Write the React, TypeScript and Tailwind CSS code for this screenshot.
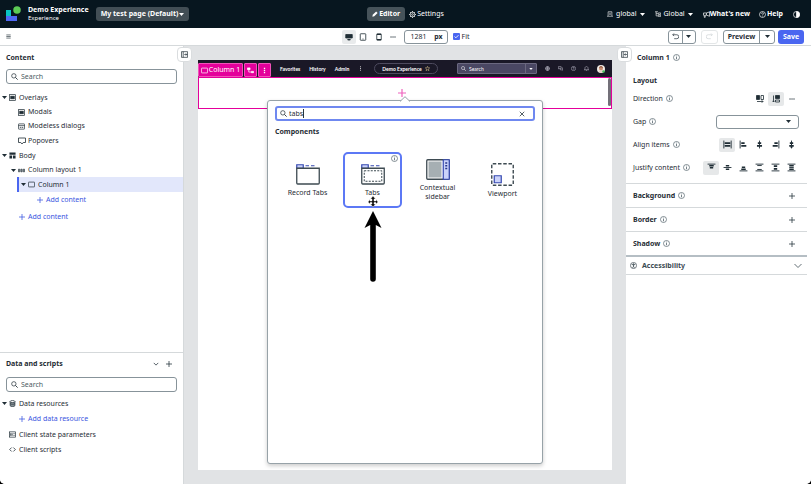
import React, { type ReactNode } from "react";

type IconProps = { className?: string; children: ReactNode; box?: string };

function Icon({ className = "size-[7px]", children, box = "0 0 16 16" }: IconProps) {
  return (
    <svg
      viewBox={box}
      className={`shrink-0 ${className}`}
      fill="none"
      stroke="currentColor"
      strokeWidth="1.6"
      aria-hidden="true"
    >
      {children}
    </svg>
  );
}

const SearchIcon = ({ className = "size-[7px]" }: { className?: string }) => (
  <Icon className={className}>
    <circle cx="6.5" cy="6.5" r="5" />
    <path d="M10.2 10.2 15.2 15.2" strokeWidth="2" />
  </Icon>
);

const Caret = ({ className = "w-[6px] h-[4px]" }: { className?: string }) => (
  <Icon className={className} box="0 0 10 6">
    <path d="M0 0h10L5 6z" fill="currentColor" stroke="none" />
  </Icon>
);

const Plus = ({ className = "size-[6px]" }: { className?: string }) => (
  <Icon className={className}>
    <path d="M8 0v16M0 8h16" strokeWidth="2" />
  </Icon>
);

const Info = () => (
  <Icon className="size-[7px] text-[#4a5a63]">
    <circle cx="8" cy="8" r="6.9" strokeWidth="1.5" />
    <path d="M8 7v5M8 3.8v1.8" strokeWidth="1.8" />
  </Icon>
);

const More = () => (
  <Icon className="size-[6px]">
    <path d="M1 8h3.5M6.3 8h3.5M11.6 8h3.5" strokeWidth="2.6" />
  </Icon>
);

const ModalIcon = () => (
  <Icon>
    <rect x="1" y="1.5" width="14" height="13" />
    <rect x="4" y="5" width="8" height="6" fill="currentColor" />
  </Icon>
);

const ModelessIcon = () => (
  <Icon>
    <rect x="1" y="2" width="14" height="12" rx="1" />
    <path d="M1 6h14M4 10h3l1-1 1 1h3" />
  </Icon>
);

const PopoverIcon = () => (
  <Icon className="size-[8px] -mr-px">
    <path d="M1 2h14v9h-4.5L8 14l-2.500-3H1z" />
  </Icon>
);

const BodyIcon = () => (
  <Icon>
    <path d="M1 1h14v5H1zM1 8h6v7H1zM9 8h6v7H9z" fill="currentColor" stroke="none" />
  </Icon>
);

const ColumnsIcon = () => (
  <Icon>
    <path d="M1 5h3v6H1zM6.500 5h3v6h-3zM12 5h3v6h-3z" fill="#8b959a" strokeWidth="1.400" />
  </Icon>
);

const ColumnIcon = () => (
  <Icon>
    <rect x="1" y="2.500" width="14" height="11" rx="1" />
  </Icon>
);

const DatabaseIcon = () => (
  <Icon>
    <path d="M2.500 3v10c0 2.500 11 2.500 11 0V3" fill="#8b959a" />
    <ellipse cx="8" cy="3.500" rx="5.500" ry="2.300" fill="#fff" />
    <path d="M2.500 8c0 2.300 11 2.300 11 0" />
  </Icon>
);

const StateIcon = () => (
  <Icon>
    <rect x="1" y="2" width="14" height="12" />
    <path d="M4 5v6M7 5v6" strokeWidth="2" />
    <path d="M10 6h3M10 10h3" />
  </Icon>
);

const CodeIcon = () => (
  <Icon>
    <path d="M6 3.500 1.500 8 6 12.500M10 3.500 14.500 8 10 12.500" strokeWidth="1.800" />
  </Icon>
);

const HelpIcon = ({ className = "size-[7px]" }: { className?: string }) => (
  <Icon className={className}>
    <circle cx="8" cy="8" r="6.800" />
    <path d="M5.800 6.300c0-3 4.600-2.800 4.400 0C10.100 8 8 7.700 8 9.800M8 11v1.600" />
  </Icon>
);

const CollapseIcon = ({ flip = false }: { flip?: boolean }) => (
  <Icon>
    <path d="M1 1.500h14v13H1zM5 1.500v13M7.500 8h6" />
    <path d={flip ? "M11 5.500 13.500 8 11 10.500" : "M10 5.500 7.500 8l2.500 2.500"} />
  </Icon>
);

function SearchBox({ label }: { label: string }) {
  return (
    <label className="mx-[6px] flex h-[15px] items-center gap-[3px] rounded-[3px] border border-[#87939a] px-[4px]">
      <SearchIcon />
      <input
        type="search"
        aria-label={label}
        placeholder="Search"
        className="min-w-0 flex-1 bg-transparent outline-none placeholder:text-[#4d5b63]"
      />
    </label>
  );
}

type RowProps = {
  icon: ReactNode;
  label: string;
  pad: string;
  height?: string;
  open?: boolean;
};

function TreeRow({ icon, label, pad, height = "h-[14px]", open = false }: RowProps) {
  return (
    <li className={`flex items-center ${pad} ${height}`}>
      <button type="button" className="flex items-center gap-[2px]">
        <span className="flex w-[5px]">{open && <Caret className="h-[3px] w-[5px]" />}</span>
        <span className="flex items-center gap-[3px]">
          {icon}
          {label}
        </span>
      </button>
    </li>
  );
}

function AddRow({ label, pad, height }: { label: string; pad: string; height: string }) {
  return (
    <li className={`flex items-center ${pad} ${height}`}>
      <button type="button" className="flex items-center gap-[3px] text-[#3a55e0]">
        <Plus />
        {label}
      </button>
    </li>
  );
}

function AppHeader() {
  return (
    <header className="grid h-[28px] shrink-0 grid-cols-[1fr_auto_1fr] items-center bg-[#07161f] text-white">
      <div className="flex items-center">
        <svg viewBox="0 0 32 32" className="ml-[5px] size-[16px]" aria-hidden="true">
          <path d="M2 8h10v12H2z" fill="#08c4c4" />
          <path d="M2 20h22v10H2z" fill="#4f68f5" />
          <circle cx="24" cy="8" r="7.500" fill="#5ccb55" />
        </svg>
        <div className="ml-[7px] leading-[8px]">
          <h1 className="font-bold">Demo Experience</h1>
          <p className="text-[6px]">Experience</p>
        </div>
        <button
          type="button"
          aria-haspopup="menu"
          className="ml-[7px] flex h-[14px] items-center gap-[1px] rounded-[3px] bg-[#424e55] px-[5px] font-bold"
        >
          My test page (Default)
          <Caret className="h-[3px] w-[5px]" />
        </button>
      </div>
      <nav className="flex items-center gap-[4px]">
        <button type="button" className="flex h-[14px] items-center gap-[1px] rounded-[3px] bg-[#46535a] px-[5px] font-bold">
          <Icon className="size-[6px]">
            <path d="m1 15 1-5 9-9 4 4-9 9z" fill="currentColor" stroke="none" />
          </Icon>
          Editor
        </button>
        <button type="button" className="flex h-[14px] items-center gap-[1px]">
          <Icon>
            <circle cx="8" cy="8" r="5.500" />
            <circle cx="8" cy="8" r="2" />
            <path d="M8 0v3M8 13v3M0 8h3M13 8h3M2.500 2.500l2 2M11.500 11.500l2 2M2.500 13.500l2-2M11.500 4.500l2-2" />
          </Icon>
          Settings
        </button>
      </nav>
      <div className="flex items-center justify-end pr-[11px]">
        <button type="button" aria-haspopup="menu" className="flex items-center gap-[3px]">
          <Icon className="size-[6px]">
            <path d="M3 13V2h10v11M0 14h16M6 6h4M6 9h4" />
          </Icon>
          global
          <Caret className="h-[3px] w-[5px]" />
        </button>
        <button type="button" aria-haspopup="menu" className="ml-[10px] flex items-center gap-[3px]">
          <Icon className="size-[6px]">
            <path d="M0 2h8M3 2v11h5M3 7h5" />
            <path d="M9 5h6v4H9zM9 11h6v4H9z" />
          </Icon>
          Global
          <Caret className="h-[3px] w-[5px]" />
        </button>
        <button type="button" className="ml-[10px] flex items-center font-bold">
          <Icon className="size-[7px]">
            <path d="M15 2v10L8 9.500H5v5H3v-5H1v-5h7zM8 4.500v5" />
          </Icon>
          What's new
        </button>
        <button type="button" className="ml-[9px] flex items-center gap-[1px] font-bold">
          <HelpIcon />
          Help
        </button>
        <button type="button" aria-label="Contrast" className="ml-[10px]">
          <Icon>
            <circle cx="8" cy="8" r="7" />
            <path d="M8 1a7 7 0 0 1 0 14z" fill="currentColor" />
          </Icon>
        </button>
      </div>
    </header>
  );
}

function Toolbar() {
  return (
    <div className="grid h-[18px] shrink-0 grid-cols-[1fr_auto_1fr] items-center border-b border-[#d5d9db] bg-white">
      <button type="button" aria-label="Menu" className="ml-[6px] w-[5px]">
        <Icon className="size-[5px]">
          <path d="M1 3h14M1 8h14M1 13h14" strokeWidth="2" />
        </Icon>
      </button>
      <div className="flex items-center">
        <button type="button" aria-label="Desktop" className="grid h-[14px] w-[14px] place-items-center rounded-[2px] bg-[#e9ebec]">
          <Icon className="size-[8px]">
            <path d="M1.500 3h13v7h-13zM5.500 13h5v1h-5z" fill="currentColor" />
          </Icon>
        </button>
        <button type="button" aria-label="Tablet" className="ml-[3px] grid h-[14px] w-[8px] place-items-center">
          <Icon className="size-[8px]">
            <rect x="2.500" y="1.500" width="11" height="13" rx="1" />
            <path d="M7 12h2" />
          </Icon>
        </button>
        <button type="button" aria-label="Phone" className="ml-[8px] grid h-[14px] w-[7px] place-items-center">
          <Icon className="size-[8px]">
            <rect x="3.500" y="1.500" width="9" height="13" rx="1" />
            <path d="M4 3h8M4 13h8" strokeWidth="2" />
          </Icon>
        </button>
        <button type="button" aria-label="More sizes" className="ml-[8px] grid h-[14px] w-[7px] place-items-center">
          <More />
        </button>
        <label className="ml-[7px] flex h-[14px] w-[44px] items-center justify-between rounded-[3px] border border-[#87939a] pr-[4px] pl-[6px] font-bold">
          <input aria-label="Width" defaultValue="1281" className="w-[18px] bg-transparent font-normal outline-none" />
          px
        </label>
        <label className="ml-[5px] flex items-center gap-[2px]">
          <span className="relative flex">
            <input type="checkbox" defaultChecked className="peer size-[7px] appearance-none rounded-[1px] bg-[#4a66f0]" />
            <Icon className="pointer-events-none absolute inset-0 size-[7px] text-white">
              <path d="m3.500 8 3 3 6-6" strokeWidth="2" />
            </Icon>
          </span>
          Fit
        </label>
      </div>
      <div className="flex items-center justify-end pr-[7px]">
        <div className="flex h-[14px] w-[28px] divide-x divide-[#87939a] rounded-[3px] border border-[#87939a]">
          <button type="button" aria-label="Undo" className="grid flex-1 place-items-center">
            <Icon>
              <path d="M4.500 1 1.500 4l3 3M2 4h9a3.500 3.500 0 0 1 0 9H5" />
            </Icon>
          </button>
          <button type="button" aria-label="Undo history" className="grid flex-1 place-items-center">
            <Caret className="h-[3px] w-[5px]" />
          </button>
        </div>
        <button type="button" aria-label="Redo" disabled className="ml-[5px] grid h-[14px] w-[17px] place-items-center rounded-[3px] border border-[#e3e6e7] text-[#cdd2d5]">
          <Icon>
            <path d="m11.500 1 3 3-3 3M14 4H5a3.500 3.500 0 0 0 0 9h6" />
          </Icon>
        </button>
        <div className="ml-[5px] flex h-[14px] w-[52px] divide-x divide-[#87939a] rounded-[3px] border border-[#87939a]">
          <button type="button" className="flex-1 font-bold">Preview</button>
          <button type="button" aria-label="Preview options" className="grid w-[14px] place-items-center">
            <Caret className="h-[3px] w-[5px]" />
          </button>
        </div>
        <button type="button" className="ml-[3px] h-[14px] w-[26px] rounded-[3px] bg-[#4a66f0] font-bold text-white">Save</button>
      </div>
    </div>
  );
}

function LeftPanel() {
  return (
    <aside className="relative flex w-[184px] shrink-0 flex-col border-r border-[#d5d9db] bg-white">
      <section className="min-h-0 flex-1 pt-[6px]">
        <h2 className="mx-[6px] mb-[5px] leading-[12px] font-bold">Content</h2>
        <SearchBox label="Search content" />
        <ul className="mt-[6px]">
          <TreeRow icon={<ModalIcon />} label="Overlays" pad="pl-[2px]" height="h-[15px]" open />
          <TreeRow icon={<ModalIcon />} label="Modals" pad="pl-[11px]" />
          <TreeRow icon={<ModelessIcon />} label="Modeless dialogs" pad="pl-[11px]" />
          <TreeRow icon={<PopoverIcon />} label="Popovers" pad="pl-[11px]" height="h-[15px]" />
          <TreeRow icon={<BodyIcon />} label="Body" pad="pl-[2px]" height="h-[15px]" open />
          <TreeRow icon={<ColumnsIcon />} label="Column layout 1" pad="pl-[11px]" open />
          <TreeRow
            icon={<ColumnIcon />}
            label="Column 1"
            pad="ml-[17px] border-l-2 border-[#4a66f0] bg-[#e2e7fb] pl-[2px]"
            height="h-[15px]"
            open
          />
          <AddRow label="Add content" pad="pl-[37px]" height="h-[16px]" />
          <AddRow label="Add content" pad="pl-[19px]" height="h-[18px]" />
        </ul>
      </section>
      <section className="border-t border-[#d5d9db] pt-[5px] pb-[27px]">
        <div className="mx-[6px] mb-[7px] flex items-center leading-[12px]">
          <h2 className="flex-1 font-bold">Data and scripts</h2>
          <button type="button" aria-label="Collapse" className="mr-[7px]">
            <Icon className="size-[6px]">
              <path d="m2 5 6 6 6-6" strokeWidth="2" />
            </Icon>
          </button>
          <button type="button" aria-label="Add" className="mr-[5px]">
            <Plus />
          </button>
        </div>
        <SearchBox label="Search data and scripts" />
        <ul className="mt-[4px]">
          <TreeRow icon={<DatabaseIcon />} label="Data resources" pad="pl-[2px]" height="h-[15px]" open />
          <AddRow label="Add data resource" pad="pl-[19px]" height="h-[16px]" />
          <TreeRow icon={<StateIcon />} label="Client state parameters" pad="pl-[2px]" height="h-[15px]" />
          <TreeRow icon={<CodeIcon />} label="Client scripts" pad="pl-[2px]" height="h-[15px]" />
        </ul>
      </section>
      <button type="button" aria-label="Collapse content panel" className="absolute top-[1px] -right-[9px] z-10 grid size-[15px] place-items-center rounded-[4px] border border-[#dadddf] bg-white">
        <CollapseIcon flip />
      </button>
    </aside>
  );
}

const FolderIcon = ({ dashed = false }: { dashed?: boolean }) => (
  <svg viewBox="0 0 48 42" className="h-[21px] w-[24px]" fill="none" aria-hidden="true">
    <path d="M1.500 1.500h13v7h-13z" fill="#cbd3fa" stroke="#3548b0" strokeWidth="2.400" />
    <path d="M19 3.500h7M30 3.500h7" stroke="#3548b0" strokeWidth="2.200" />
    <path d="M1.500 8.500h45V38a2 2 0 0 1-2 2h-41a2 2 0 0 1-2-2z" fill="#fff" stroke="#3e4b52" strokeWidth="2.600" />
    {dashed && <path d="M6.500 13.500h35v21h-35z" stroke="#3e4b52" strokeWidth="2" strokeDasharray="4 2.500" />}
  </svg>
);

const SidebarIcon = () => (
  <svg viewBox="0 0 48 42" className="h-[21px] w-[24px]" fill="none" aria-hidden="true">
    <rect x="1.500" y="1.500" width="45" height="39" rx="2" fill="#fff" stroke="#3e4b52" strokeWidth="2.600" />
    <path d="M5 5h26v32H5z" fill="#a6afb3" />
    <path d="M34.500 1.500h12v39h-12z" fill="#cbd3fa" stroke="#3548b0" strokeWidth="2.400" />
    <path d="M38.500 8h4M38.500 13.500h4M38.500 19h4" stroke="#27368a" strokeWidth="2.600" />
  </svg>
);

const ViewportIcon = () => (
  <svg viewBox="0 0 46 46" className="size-[23px]" fill="none" aria-hidden="true">
    <rect x="1.500" y="1.500" width="43" height="43" rx="2" stroke="#3e4b52" strokeWidth="2.800" strokeDasharray="7 3.500" />
    <path d="M6.500 25.500h14v14h-14z" fill="#cbd3fa" stroke="#3548b0" strokeWidth="2.400" />
  </svg>
);

function ComponentTile({ icon, label, selected = false }: { icon: ReactNode; label: string; selected?: boolean }) {
  return (
    <li className="flex justify-center">
      <button
        type="button"
        className={`relative flex h-[56px] w-[59px] flex-col items-center justify-center gap-[3px] rounded-[5px] border-2 leading-[9px] ${
          selected ? "border-[#5c78f5]" : "border-transparent"
        }`}
      >
        {icon}
        <span>{label}</span>
        {selected && (
          <span className="absolute top-[1px] right-[2px]">
            <Info />
          </span>
        )}
      </button>
    </li>
  );
}

function ComponentPicker() {
  return (
    <div className="absolute inset-x-[69px] top-[40px] bottom-[6px] rounded-[3px] border border-[#97a2a8] bg-white px-[7px] pt-[5px] shadow-[0_2px_4px_rgba(0,0,0,0.2)]">
      <svg viewBox="0 0 10 6" className="absolute -top-[5px] left-1/2 h-[6px] w-[10px] -translate-x-1/2" aria-hidden="true">
        <path d="M0 5.500 5 .7l5 4.800" fill="#fff" stroke="#97a2a8" />
      </svg>
      <label className="flex h-[15px] items-center rounded-[3px] border-2 border-[#6f88f0] px-[3px]">
        <SearchIcon />
        <input
          aria-label="Search components"
          defaultValue="tabs"
          className="ml-[2px] [field-sizing:content] bg-transparent caret-transparent outline-none"
        />
        <span className="h-[9px] w-px bg-[#26343c]" />
        <button type="button" aria-label="Clear" className="mr-[5px] ml-auto">
          <Icon className="size-[6px]">
            <path d="m2 2 12 12M14 2 2 14" strokeWidth="2" />
          </Icon>
        </button>
      </label>
      <h2 className="mt-[5px] mb-[14px] leading-[12px] font-bold">Components</h2>
      <ul className="grid grid-cols-4">
        <ComponentTile icon={<FolderIcon />} label="Record Tabs" />
        <ComponentTile icon={<FolderIcon dashed />} label="Tabs" selected />
        <ComponentTile icon={<SidebarIcon />} label="Contextual sidebar" />
        <ComponentTile icon={<ViewportIcon />} label="Viewport" />
      </ul>
      <svg viewBox="0 0 20 86" className="pointer-events-none absolute top-[95px] left-[95px] h-[86px] w-[20px]" aria-hidden="true">
        <path
          d="m10 0 2.500 3H11v2h2V3.500L15 6l-2 2V6.500h-2V8h1.500L10 11 7.500 8H9V6.500H7V8L5 6l2-2.500V5h2V3H7.500z"
          fill="#111"
          stroke="#fff"
          strokeWidth=".4"
        />
        <path d="m10 15 8.500 17-5.700-3V83a2.800 2.800 0 0 1-5.600 0V29l-5.700 3z" fill="#000" />
      </svg>
    </div>
  );
}

function PreviewHeader() {
  return (
    <div className="flex h-[17px] items-center bg-[#1a1827] pl-[82px] font-[Lato,sans-serif] text-[5px] text-white">
      <nav className="flex items-center gap-[9px] font-bold">
        <button type="button">Favorites</button>
        <button type="button">History</button>
        <button type="button">Admin</button>
        <button type="button" aria-label="More">
          <Icon className="size-[5px]">
            <path d="M8 1v3M8 6.500v3M8 12v3" strokeWidth="2.400" />
          </Icon>
        </button>
      </nav>
      <button type="button" className="ml-[11px] flex h-[11px] items-center gap-[3px] rounded-full border border-[#4d4a5e] px-[7px] font-bold">
        Demo Experience
        <Icon className="size-[5px] text-[#e0c890]">
          <path d="m8 1 2 5h5l-4 3.500 1.500 5.500L8 12l-4.500 3L5 9.500 1 6h5z" />
        </Icon>
      </button>
      <div className="ml-auto flex h-[11px] w-[80px] items-center rounded-[1px] border border-[#6b6880] bg-[#4a4763]">
        <span className="ml-[3px] flex">
          <SearchIcon className="size-[5px]" />
        </span>
        <input aria-label="Search preview" placeholder="Search" className="ml-[3px] min-w-0 flex-1 bg-transparent outline-none placeholder:text-white" />
        <button type="button" aria-label="Search options" className="grid h-full w-[11px] place-items-center border-l border-[#6b6880]">
          <Caret className="h-[2px] w-[4px]" />
        </button>
      </div>
      <div className="mr-[7px] ml-[8px] flex items-center gap-[8px] text-[#c6c4d2]">
        <Icon className="size-[5px]">
          <circle cx="8" cy="8" r="6.500" />
          <path d="M1 8h14M8 1v14M3 4h10M3 12h10" />
        </Icon>
        <Icon className="size-[5px]">
          <path d="M1 2h9v6H5l-2 2V8H1zM12 6h3v6h-2v2l-2-2H7V9.500" />
        </Icon>
        <HelpIcon className="size-[5px]" />
        <Icon className="size-[5px]">
          <path d="M3 12V7c0-7 10-7 10 0v5h2H1zM6 14h4" />
        </Icon>
        <svg viewBox="0 0 16 16" className="size-[8px]" aria-hidden="true">
          <circle cx="8" cy="8" r="8" fill="#f1e9e3" />
          <circle cx="8" cy="7" r="4" fill="#c98d72" />
          <path d="M4 6c0-5 8-5 8 0-2-2-6-2-8 0z" fill="#844b35" />
          <path d="M3 13c2-4 8-4 10 0-2 3-8 3-10 0z" fill="#e5cfc4" />
          <circle cx="13" cy="13" r="2.500" fill="#3fc15a" />
        </svg>
      </div>
    </div>
  );
}

function Canvas() {
  return (
    <main className="flex min-w-0 flex-1 flex-col bg-[#e1e3e5] px-[14px] pt-[14px] pb-[14px]">
      <div className="relative flex-1 bg-white">
        <PreviewHeader />
        <div className="relative flex h-[32px] justify-center border border-[#e4009b] bg-white">
          <button type="button" aria-label="Add component" className="mt-[11px] mr-[6px] h-[8px] text-[#ee62bd]">
            <Icon className="size-[8px]">
              <path d="M8 0v16M0 8h16" strokeWidth="2.400" />
            </Icon>
          </button>
          <span className="absolute top-0 right-0 h-[28px] w-[3px] rounded-full bg-[#737079]" />
        </div>
        <div className="absolute top-[3px] left-0 flex gap-[1px] text-white">
          <button type="button" className="flex h-[14px] w-[45px] items-center justify-center gap-[1px] rounded-[1px] border border-[#f052b8] bg-[#e4009b]">
            <ColumnIcon />
            Column 1
          </button>
          <button type="button" aria-label="Select parent" className="grid h-[14px] w-[13px] place-items-center rounded-[1px] border border-[#f052b8] bg-[#e4009b]">
            <Icon>
              <path d="M1 2h6v4H1zM10 10h5v3h-5z" fill="currentColor" />
              <path d="M4 6v5.500h6" />
            </Icon>
          </button>
          <button type="button" aria-label="Column actions" className="grid h-[14px] w-[13px] place-items-center rounded-[1px] border border-[#f052b8] bg-[#e4009b]">
            <Icon>
              <path d="M8 1.500v3M8 6.500v3M8 11.500v3" strokeWidth="3" />
            </Icon>
          </button>
        </div>
        <ComponentPicker />
      </div>
    </main>
  );
}

type IconButtonProps = { label: string; lines: string; bars?: string; active?: boolean };

function IconButton({ label, lines, bars = "", active = false }: IconButtonProps) {
  return (
    <button
      type="button"
      aria-label={label}
      className={`grid h-[14px] w-[16px] place-items-center rounded-[2px] ${active ? "bg-[#e6e8e9]" : ""}`}
    >
      <Icon className="size-[9px]">
        <path d={lines} />
        <path d={bars} strokeWidth="2.800" />
      </Icon>
    </button>
  );
}

function PropertyRow({ label, children }: { label: string; children: ReactNode }) {
  return (
    <div className="flex h-[15px] items-center justify-between">
      <span className="flex items-center gap-[3px]">
        {label}
        <Info />
      </span>
      <div className="flex items-center">{children}</div>
    </div>
  );
}

function StyleSection({ label }: { label: string }) {
  return (
    <section className="mr-[4px] flex h-[24px] items-center border-t border-[#d5d9db] pr-[12px] pl-[7px]">
      <h3 className="flex flex-1 items-center gap-[3px] font-bold">
        {label}
        <Info />
      </h3>
      <button type="button" aria-label={`Add ${label}`}>
        <Plus />
      </button>
    </section>
  );
}

function RightPanel() {
  return (
    <aside className="relative w-[185px] shrink-0 bg-white pt-[5px]">
      <button type="button" aria-label="Collapse properties panel" className="absolute top-[1px] -left-[9px] z-10 grid size-[15px] place-items-center rounded-[4px] border border-[#dadddf] bg-white">
        <CollapseIcon />
      </button>
      <h2 className="ml-[11px] flex h-[13px] items-center gap-[3px] font-bold">
        Column 1
        <Info />
      </h2>
      <section className="pr-[12px] pb-[8px] pl-[7px]">
        <h3 className="mt-[11px] mb-[4px] leading-[12px] font-bold">Layout</h3>
        <div className="flex flex-col gap-[8px]">
          <PropertyRow label="Direction">
            <button type="button" aria-label="Row" className="grid h-[14px] w-[16px] place-items-center">
              <Icon className="size-[8px]">
                <path d="M1 1h6v8H1z" fill="currentColor" />
                <path d="M10 1h5v8h-5zM2 13h12M11.500 10.500 14 13l-2.500 2.500" />
              </Icon>
            </button>
            <button type="button" aria-label="Column" className="grid h-[14px] w-[16px] place-items-center rounded-[2px] bg-[#e6e8e9]">
              <Icon className="size-[8px]">
                <path d="M7 1h8v6H7z" fill="currentColor" />
                <path d="M7 10h8v4H7zM3 1v13M.5 11.500 3 14l2.500-2.500" />
              </Icon>
            </button>
            <button type="button" aria-label="More directions" className="grid h-[14px] w-[15px] place-items-center">
              <More />
            </button>
          </PropertyRow>
          <div className="flex h-[15px] items-center justify-between">
            <label htmlFor="gap" className="flex items-center gap-[3px]">
              Gap
              <Info />
            </label>
            <div className="relative flex h-[14px] w-[83px] items-center">
              <select id="gap" defaultValue="" className="h-full w-full appearance-none rounded-[3px] border border-[#87939a] bg-white px-[4px]">
                <option value=""></option>
                <option>Small</option>
                <option>Large</option>
              </select>
              <span className="pointer-events-none absolute right-[8px]">
                <Caret className="h-[3px] w-[5px]" />
              </span>
            </div>
          </div>
          <PropertyRow label="Align items">
            <IconButton label="Stretch items" active lines="M1.500 1v14M14.500 1v14" bars="M3 5.500h10M3 10.500h10" />
            <IconButton label="Align start" lines="M2 1v14" bars="M4 5.500h6M4 10.500h9" />
            <IconButton label="Align center" lines="M8 1v14" bars="M5 5.500h6M3.500 10.500h9" />
            <IconButton label="Align end" lines="M14 1v14" bars="M6 5.500h6M3 10.500h9" />
            <IconButton label="Align baseline" lines="M8 1v14M8 3v10" bars="M5 5.500h6M4 10.500h8M6.500 13h3" />
          </PropertyRow>
          <PropertyRow label="Justify content">
            <IconButton label="Justify start" active lines="M1 2h14" bars="M4 5h8M5 8.500h6" />
            <IconButton label="Justify center" lines="M1 8h14" bars="M5 5h6M5 11h6" />
            <IconButton label="Justify end" lines="M1 14h14" bars="M5 7.500h6M4 11h8" />
            <IconButton label="Space between" lines="M1 2h14M1 14h14M4 4.500h8M4 11.500h8" />
            <IconButton label="Space around" lines="M1 2h14M1 14h14" bars="M5 5.500h6M5 10.500h6" />
            <IconButton label="Space evenly" lines="M1 2h14M1 14h14M4 8h8" bars="M4 5h8M4 11h8" />
          </PropertyRow>
        </div>
      </section>
      <StyleSection label="Background" />
      <StyleSection label="Border" />
      <StyleSection label="Shadow" />
      <div className="mr-[4px]">
        <button type="button" className="flex h-[20px] w-full items-center border-t-2 border-b border-t-[#b5bec4] border-b-[#d5d9db] pr-[5px] pl-[4px] font-bold text-[#3d4b53]">
          <Icon>
            <circle cx="8" cy="8" r="7" />
            <path d="M4 6h8M8 6v4l-2 3M8 10l2 3M8 3v2" strokeWidth="2" />
          </Icon>
          <span className="ml-[5px] flex-1 text-left">Accessibility</span>
          <Icon className="size-[8px]">
            <path d="m1 4 7 7 7-7" />
          </Icon>
        </button>
      </div>
    </aside>
  );
}

export default function App() {
  return (
    <div className="h-screen bg-black font-['Noto_Sans',sans-serif] text-[7px] leading-[10px] text-[#1f2d35]">
      <div className="flex h-full flex-col overflow-hidden rounded-b-[5px] bg-white">
        <AppHeader />
        <Toolbar />
        <div className="flex min-h-0 flex-1">
          <LeftPanel />
          <Canvas />
          <RightPanel />
        </div>
      </div>
    </div>
  );
}
